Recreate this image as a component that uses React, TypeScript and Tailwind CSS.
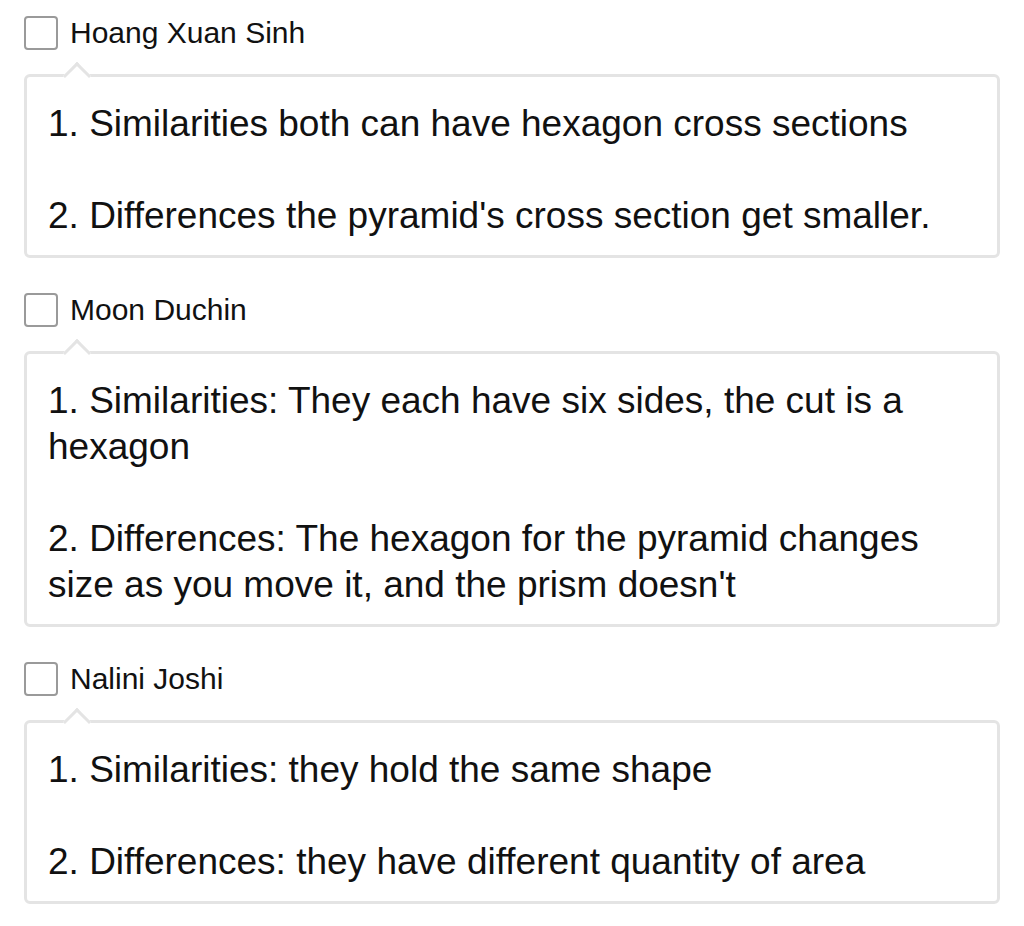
const responses = [
  {
    name: 'Hoang Xuan Sinh',
    lines: [
      '1. Similarities both can have hexagon cross sections',
      "2. Differences the pyramid's cross section get smaller.",
    ],
  },
  {
    name: 'Moon Duchin',
    lines: [
      '1. Similarities: They each have six sides, the cut is a hexagon',
      "2. Differences: The hexagon for the pyramid changes size as you move it, and the prism doesn't",
    ],
  },
  {
    name: 'Nalini Joshi',
    lines: [
      '1. Similarities: they hold the same shape',
      '2. Differences: they have different quantity of area',
    ],
  },
];

function ResponseItem({ name, lines }: { name: string; lines: string[] }) {
  return (
    <div>
      <label className="flex items-center gap-3 h-[34px]">
        <input type="checkbox" className="sr-only" />
        <span className="w-[34px] h-[34px] shrink-0 rounded-[4px] border-2 border-[#9a9a9a] bg-white" />
        <span className="text-[30px] leading-none text-[#111]">{name}</span>
      </label>
      <div className="relative mt-6 rounded-md border-[3px] border-[#e4e4e4] bg-white px-[21px] pt-[24px] pb-[16px]">
        <span className="absolute left-[40px] -top-[11.5px] w-5 h-5 rotate-45 border-t-[3px] border-l-[3px] border-[#e4e4e4] bg-white" />
        <div className="relative flex flex-col gap-[46px] text-[37px] leading-[46px] text-[#111]">
          {lines.map((line, i) => (
            <p key={i}>{line}</p>
          ))}
        </div>
      </div>
    </div>
  );
}

export default function App() {
  return (
    <div
      className="min-h-[926px] bg-white px-6 pt-4 flex flex-col gap-[35px]"
      style={{ fontFamily: '"Liberation Sans", Arial, Helvetica, sans-serif' }}
    >
      {responses.map((r) => (
        <ResponseItem key={r.name} name={r.name} lines={r.lines} />
      ))}
    </div>
  );
}
